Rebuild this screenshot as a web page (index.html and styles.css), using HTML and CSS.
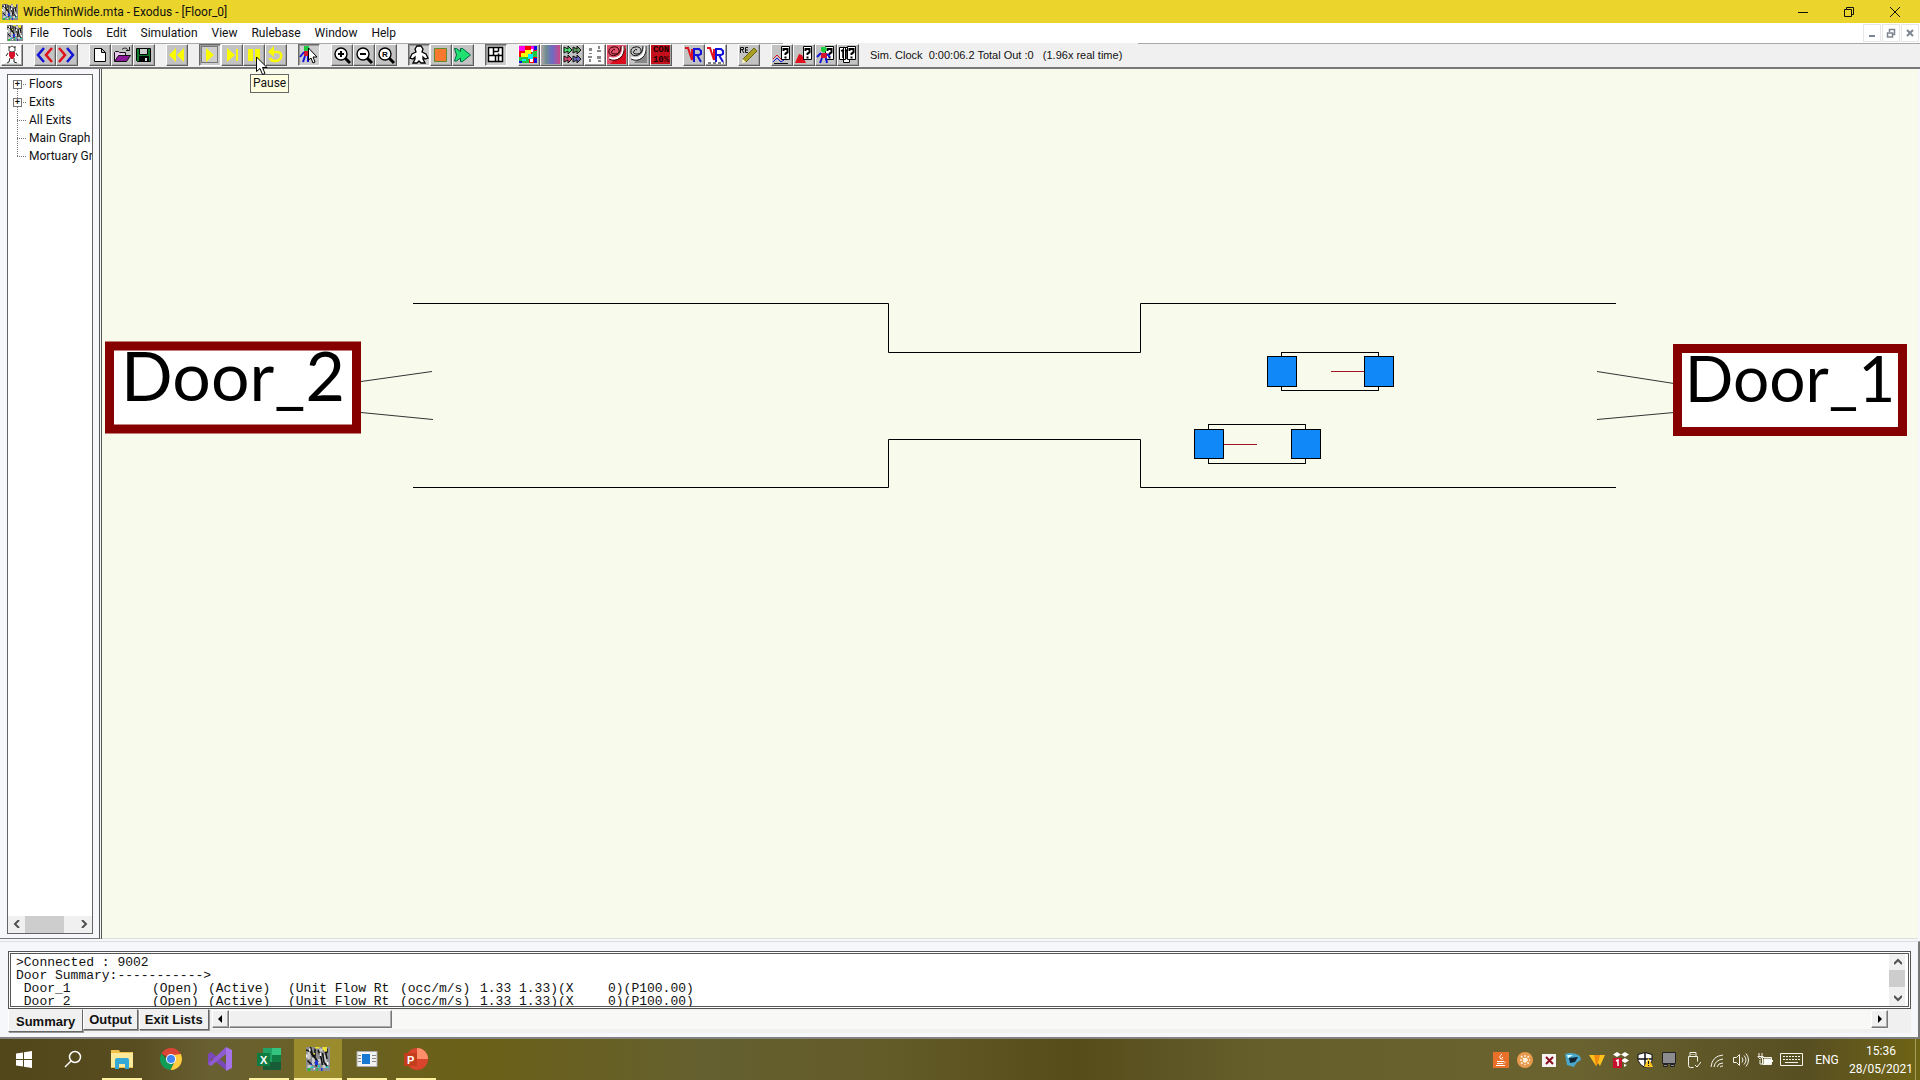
FILE: index.html
```html
<!DOCTYPE html>
<html lang="en">
<head>
<meta charset="utf-8">
<title>WideThinWide.mta - Exodus - [Floor_0]</title>
<link rel="stylesheet" href="styles.css">
</head>
<body>
<svg class="defs" aria-hidden="true">
  <symbol id="exodus" viewBox="0 0 16 16">
    <path fill="#8c8c90" d="M0 0h16v16H0z"/>
    <path fill="#c9c9cc" d="M1 3h2v5H1zM4 6h2v6H4zM7 8h3v3H7zM12 5h2v6h-2zM9 1h2v2H9zM1 12h3v2H1zM11 12h3v2h-3z"/>
    <path stroke="#111" fill="none" d="M0 2l3 1 2 4M3 0l1 4 3 5M6 1v6l2 3M8 2l2 5 1 5M11 4l1 6 2 3M13 3l1 5M1 9l3 3M14 1v3M6 10l1 3"/>
    <path fill="#ece23a" d="M6 0h3v1H6zM11 0h3v3h-2V2h-1zM5 4h1v1H5z"/>
    <path fill="#f5f5f5" d="M2 1h1v2H2zM9 4h1v2H9zM14 10h1v2h-1zM5 14h1v1H5zM0 5h1v2H0z"/>
    <path fill="#2037d8" d="M6 9h2v3H6zM10 14h1v2h-1zM3 11h1v1H3z"/>
    <path fill="#1fd0c8" d="M3 13h2v1H3zM8 12h1v2H8zM13 13h2v1h-2z"/>
    <path fill="#29b83c" d="M1 14h2v2H1zM7 14h1v2H7z"/>
  </symbol>
  <symbol id="lens" viewBox="0 0 20 20">
    <path d="M13 13l5 5" stroke="#000" stroke-width="3"/>
    <circle cx="9" cy="9" r="6" fill="#fff" stroke="#000" stroke-width="1.4"/>
  </symbol>
  <symbol id="query" viewBox="0 0 20 20">
    <path fill="#fff" stroke="#000" d="M9.500 1.500h8v13h-8z"/>
    <path fill="none" stroke="#000" stroke-width="2" d="M11.500 6V4h4v3.500l-2 1V10M13.500 11.500v2"/>
  </symbol>
</svg>

<header class="titlebar">
  <svg class="logo"><use href="#exodus"/></svg>
  <h1 class="title">WideThinWide.mta - Exodus - [Floor_0]</h1>
  <div class="window-buttons">
    <button class="win-btn" aria-label="Minimize"><svg viewBox="0 0 12 12"><path d="M1 6.500h10"/></svg></button>
    <button class="win-btn" aria-label="Restore"><svg viewBox="0 0 12 12"><path d="M1.500 3.500h7v7h-7zM3.500 3.500v-2h7v7h-2"/></svg></button>
    <button class="win-btn" aria-label="Close"><svg viewBox="0 0 12 12"><path d="M1 1l10 10M11 1L1 11"/></svg></button>
  </div>
</header>

<nav class="menubar" aria-label="Main menu">
  <svg class="logo"><use href="#exodus"/></svg>
  <button class="menu">File</button>
  <button class="menu">Tools</button>
  <button class="menu">Edit</button>
  <button class="menu">Simulation</button>
  <button class="menu">View</button>
  <button class="menu">Rulebase</button>
  <button class="menu">Window</button>
  <button class="menu">Help</button>
  <div class="mdi-buttons">
    <button class="mdi-btn" aria-label="Minimize floor"><svg viewBox="0 0 10 10"><path d="M2 8h6"/></svg></button>
    <button class="mdi-btn" aria-label="Restore floor"><svg viewBox="0 0 10 10"><path stroke-width="1.500" d="M1.500 5h5v4h-5zM3.500 4V1.500h5v5H7"/></svg></button>
    <button class="mdi-btn" aria-label="Close floor"><svg viewBox="0 0 10 10"><path d="M2 2l6 6M8 2L2 8"/></svg></button>
  </div>
</nav>

<div class="toolbar">
  <div class="group">
    <button class="tool light" aria-label="Person"><svg viewBox="0 0 20 20"><path fill="#fff" stroke="#444" d="M7 3l3-2 3 2v3l-3 1-3-1z"/><path stroke="#222" fill="none" d="M7 1v2M13 1v2M6 8L4 11M14 8l2 3M8 13l-1 4-2 1M12 13v4l3 1"/><path fill="#d8122a" d="M7 7h6v4l-2 3H9l-2-3z"/><path stroke="#bbb" d="M3 19h14"/></svg></button>
  </div>
  <div class="group">
    <button class="tool" aria-label="Previous"><svg viewBox="0 0 20 20"><g fill="none" stroke-width="2.500"><path stroke="#1414d8" d="M9 3l-6 7 6 7"/><path stroke="#e0101c" d="M17 3l-6 7 6 7"/></g></svg></button>
    <button class="tool" aria-label="Next"><svg viewBox="0 0 20 20"><g fill="none" stroke-width="2.500"><path stroke="#e0101c" d="M2 3l6 7-6 7"/><path stroke="#1414d8" d="M10 3l6 7-6 7"/></g></svg></button>
  </div>
  <div class="group">
    <button class="tool" aria-label="New"><svg viewBox="0 0 20 20"><path fill="#fff" stroke="#000" d="M4.500 3.500h7l4 4v9h-11zM11.500 3.500v4h4"/></svg></button>
    <button class="tool" aria-label="Open"><svg viewBox="0 0 20 20"><path fill="#e8c8ec" stroke="#111" d="M2.500 16V7.500l1-1h3l1 1h6V10"/><path fill="#8a1898" stroke="#111" d="M2.500 16.500l4-6h12l-4 6z"/><path fill="none" stroke="#111" d="M10 4.500c2-2 5-2 6 1M14 5.500h3.500V2"/></svg></button>
    <button class="tool" aria-label="Save"><svg viewBox="0 0 20 20"><path fill="#0c7a28" stroke="#000" d="M2.500 3.500h14v13h-13l-1-1z"/><path fill="#ccc" stroke="#000" d="M5.500 3.500h8v6h-8z"/><path fill="#000" d="M5 11h10v6H5z"/><path fill="#ddd" d="M11 13h2v3h-2z"/></svg></button>
  </div>
  <div class="group">
    <button class="tool" aria-label="Rewind"><svg viewBox="0 0 20 20"><path fill="#fafa00" d="M9 3v14l-7-7zM17 3v14l-7-7z"/></svg></button>
  </div>
  <div class="group">
    <button class="tool pressed" aria-label="Play"><svg viewBox="0 0 20 20"><path fill="none" stroke="#222" stroke-dasharray="1 1" d="M1.500 1.500h16v16h-16z"/><path fill="#fafa00" d="M6 3l8 7-8 7z"/></svg></button>
    <button class="tool" aria-label="Step"><svg viewBox="0 0 20 20"><path fill="#fafa00" d="M5 3l8 7-8 7zM14 4h2v12h-2z"/></svg></button>
    <button class="tool" aria-label="Pause" aria-describedby="pause-tip"><svg viewBox="0 0 20 20"><path fill="#fafa00" d="M4 4h5v12H4zM11 4h5v12h-5z"/></svg></button>
    <button class="tool" aria-label="Reset"><svg viewBox="0 0 20 20"><path fill="none" stroke="#fafa00" stroke-width="2.500" d="M5 7h7q4 1 3 5-1 4-6 4-4 0-5-3"/><path fill="#fafa00" d="M8 1v11L2 7z"/></svg></button>
    <div class="tooltip" id="pause-tip" role="tooltip">Pause</div>
    <svg class="pointer" viewBox="0 0 13 20"><path fill="#fff" stroke="#000" d="M1.500 1v14.500l3.500-3 2.500 6 2.500-1-2.500-6H12z"/></svg>
  </div>
  <div class="group">
    <button class="tool pressed" aria-label="Select person"><svg viewBox="0 0 20 20"><path fill="#1ec840" d="M5 1h5v5H5z"/><path fill="#d8122a" d="M5 6h6v5H5z"/><path stroke="#1414d8" stroke-width="2" fill="none" d="M5 7l-4 5M6 11l-2 6M9 11v6"/><path fill="#fff" stroke="#000" d="M9.500 3v12l2.500-2 2 5 2-1-2-5h4z"/></svg></button>
  </div>
  <div class="group">
    <button class="tool" aria-label="Zoom in"><svg viewBox="0 0 20 20"><use href="#lens"/><path stroke="#000" stroke-width="2" d="M6 9h6M9 6v6"/></svg></button>
    <button class="tool" aria-label="Zoom out"><svg viewBox="0 0 20 20"><use href="#lens"/><path stroke="#000" stroke-width="2" d="M6 9h6"/></svg></button>
    <button class="tool" aria-label="Reset zoom"><svg viewBox="0 0 20 20"><use href="#lens"/><text class="glyph" x="6" y="12">R</text></svg></button>
  </div>
  <div class="group">
    <button class="tool pressed" aria-label="Occupants"><svg viewBox="0 0 20 20"><path fill="#fff" stroke="#000" stroke-width="1.300" d="M6 4l2-3h4l2 3-1 3 4 2 2 4-3 1-2-2v2l2 4h-4l-2-2-2 2H4l2-4v-2l-2 2-3-1 2-4 4-2z"/></svg></button>
    <button class="tool" aria-label="Stop"><svg viewBox="0 0 20 20"><path fill="#f87830" stroke="#5f8c30" d="M3.500 3.500h12v13h-12z"/></svg></button>
    <button class="tool" aria-label="Go"><svg viewBox="0 0 20 20"><path fill="#20e070" stroke="#064" d="M1.500 3.500h2l4 3V3.500h2l8 6.500-8 6.500h-2V13l-4 3h-2l2-6z"/></svg></button>
  </div>
  <div class="group">
    <button class="tool pressed" aria-label="Floor grid"><svg viewBox="0 0 20 20"><path fill="#fff" stroke="#000" stroke-width="1.500" d="M2.500 2.500h14v14h-14zM7.500 2.500v8M12.500 2.500v4M9.500 10.500v6M12.500 8.500v8M2.500 10.500h14M7.500 6.500h5"/></svg></button>
  </div>
  <div class="group">
    <button class="tool" aria-label="Colours"><svg viewBox="0 0 20 20"><path fill="#f00" d="M0 1h18v17H0z"/><path fill="#f0e" d="M0 1h6v5H0zM12 1h3v5h-3z"/><path fill="#ff0" d="M6 5h6v4H9v3H2V8h4z"/><path fill="#1ec840" d="M0 12h10v6H0zM13 6h5v6h-5z"/><path fill="#0ef" d="M9 9h5v5H9zM3 14h4v2H3z"/><path fill="#11d" d="M15 1h3v4h-3zM15 13h3v5h-3zM0 16h3v2H0z"/><path fill="#fff" d="M12 4h2v3h-2zM11 14h3v3h-3z"/></svg></button>
    <button class="tool spectrum" aria-label="Contour colours"></button>
    <button class="tool" aria-label="Flow arrows"><svg viewBox="0 0 20 20"><g stroke="#111"><path fill="#4be070" d="M1 2l4 2V1l4 4-4 4V6L1 8z"/><path fill="#5c9c5c" d="M10 2l4 2V1l4 4-4 4V6l-4 2z"/><path fill="#d84870" d="M1 11l4 2v-3l4 4-4 4v-3l-4 2z"/><path fill="#6464b8" d="M10 11l4 2v-3l4 4-4 4v-3l-4 2z"/></g></svg></button>
    <button class="tool light" aria-label="Footsteps"><svg viewBox="0 0 20 20"><path fill="#888" d="M4 3h3v3H4zM4 8h3v1H4zM13 1h2v3h-2zM12 5h4v2h-4zM3 11h4v2H3zM4 14h2v3H4zM12 11h4v3h-4zM13 15h3v2h-3z"/></svg></button>
    <button class="tool" aria-label="Red contours"><svg viewBox="0 0 20 20"><path fill="#e0506a" d="M0 0h19v19H0z"/><path fill="#d80c1c" d="M3 19L19 3v16z"/><path fill="none" stroke="#fff" stroke-width="2.500" d="M16 1q1 8-4 11T2 13"/><path fill="none" stroke="#300" d="M17 1q1 8-4 12T2 14M14 1q0 7-5 9T2 8q-1-5 4-6t6 3-4 4-3-3 3-1"/></svg></button>
    <button class="tool" aria-label="Grey contours"><svg viewBox="0 0 20 20"><path fill="#888" d="M5 18L18 4v14z"/><path fill="none" stroke="#fff" stroke-width="3" d="M16 1q1 8-4 11T2 13"/><path fill="none" stroke="#111" d="M17 1q1 8-4 12T2 14M14 1q0 7-5 9T2 8q-1-5 4-6t6 3-4 4-3-3 3-1"/></svg></button>
    <button class="tool contour" aria-label="Contour 10%"><span>CON</span><span>10%</span></button>
  </div>
  <div class="group">
    <button class="tool" aria-label="VR"><svg viewBox="0 0 20 20"><path fill="none" stroke="#e0101c" stroke-width="2" d="M1 3h3l4 12V4"/><path fill="none" stroke="#1414d8" stroke-width="2" d="M10 17V4h5l2 2v3l-2 1h-5M13 10l4 7"/></svg></button>
    <button class="tool light" aria-label="VR options"><svg viewBox="0 0 20 20"><path fill="none" stroke="#e0101c" stroke-width="2" d="M1 3h3l4 12V4"/><path fill="none" stroke="#1414d8" stroke-width="2" d="M10 17V4h5l2 2v3l-2 1h-5M13 10l4 7"/><path stroke="#000" stroke-dasharray="3 2" d="M2 18h16"/></svg></button>
  </div>
  <div class="group">
    <button class="tool" aria-label="Edit rules"><svg viewBox="0 0 20 20"><path fill="none" stroke="#111" d="M1.500 8V2.500h3v2h-3M3 5l2 3M9 2.500H6.500v5H9M6.500 5H9"/><path fill="#a8a020" stroke="#6a6410" d="M4 14L15 3l3 3L7 17z"/><path fill="#fff8b0" d="M4 14l3 3-4 1z"/></svg></button>
  </div>
  <div class="group">
    <button class="tool" aria-label="Graph query"><svg viewBox="0 0 20 20"><path fill="none" stroke="#d8122a" d="M1 14l4-4 5 5"/><path fill="none" stroke="#1414d8" d="M1 17l4-4 4 4 3-2"/><path stroke="#111" d="M2 18.500h14"/><use href="#query"/></svg></button>
    <button class="tool" aria-label="Hazard query"><svg viewBox="0 0 20 20"><path fill="#e0101c" d="M1 18l4-9 3 1 4 8z"/><use href="#query"/></svg></button>
    <button class="tool" aria-label="Person query"><svg viewBox="0 0 20 20"><use href="#query"/><path fill="#1ed040" d="M5 2h5l1 3-3 3-3-2z"/><path fill="#d8122a" d="M5 8h6v5H5z"/><path stroke="#1414d8" stroke-width="2" fill="none" d="M5 8l-4 4M11 9l3 3M6 13l-2 5M10 13l1 5"/></svg></button>
    <button class="tool" aria-label="Group query"><svg viewBox="0 0 20 20"><path fill="#fff" stroke="#000" d="M1.500 2.500h6v12h-6zM5.500 2.500h6v15h-6z"/><path stroke="#000" fill="none" stroke-width="1.500" d="M3 6l2-1v8M7 6l2-1v9"/><use href="#query"/></svg></button>
  </div>
  <div class="clock">Sim. Clock&nbsp; 0:00:06.2 Total Out :0&nbsp;&nbsp; (1.96x real time)</div>
</div>

<main class="workspace">
  <aside class="sidebar">
    <div class="tree-box">
      <ul class="tree">
        <li class="node"><button class="expander" aria-label="Expand Floors">+</button>Floors</li>
        <li class="node"><button class="expander" aria-label="Expand Exits">+</button>Exits</li>
        <li class="node">All Exits</li>
        <li class="node">Main Graph</li>
        <li class="node">Mortuary Gr</li>
      </ul>
      <div class="tree-scroll">
        <button class="chevron" aria-label="Scroll left"><svg viewBox="0 0 8 8"><path d="M6 0L2 4l4 4"/></svg></button>
        <div class="tree-thumb"></div>
        <button class="chevron" aria-label="Scroll right"><svg viewBox="0 0 8 8"><path d="M2 0l4 4-4 4"/></svg></button>
      </div>
    </div>
  </aside>
  <section class="floor" aria-label="Floor_0">
    <svg class="plan" viewBox="102 69 1816 869">
      <path class="wall" d="M413 303.500h475.500v49h252v-49H1616M413 487.500h475.500v-48h252v48H1616"/>
      <path class="link" d="M361 381.500L432 371.500M361 412.500L433 419.500M1597 371.500L1674 383.500M1597 419.500L1674 412.500"/>
      <g class="door large"><rect x="109.500" y="346" width="247" height="83"/><text x="233" y="401">Door_2</text></g>
      <g class="door"><rect x="1677.500" y="348.500" width="225" height="83"/><text x="1790" y="402">Door_1</text></g>
      <g class="agent">
        <rect class="frame" x="1281.500" y="352.500" width="97" height="38"/>
        <path d="M1331 371.500h34"/>
        <rect x="1267.500" y="356.500" width="29" height="30"/><rect x="1364.500" y="356.500" width="29" height="30"/>
      </g>
      <g class="agent">
        <rect class="frame" x="1208.500" y="424.500" width="97" height="39"/>
        <path d="M1223 444.500h34"/>
        <rect x="1194.500" y="429.500" width="29" height="29"/><rect x="1291.500" y="429.500" width="29" height="29"/>
      </g>
    </svg>
  </section>
</main>

<section class="output">
  <div class="console">
    <div class="log">
      <div>&gt;Connected : 9002</div>
      <div>Door Summary:-----------&gt;</div>
      <div class="door-row"><span>&nbsp;Door_1</span><span>(Open)</span><span>(Active)</span><span>(Unit Flow Rt</span><span>(occ/m/s)</span><span>1.33 1.33)(X</span><span>0)(P100.00)</span></div>
      <div class="door-row"><span>&nbsp;Door_2</span><span>(Open)</span><span>(Active)</span><span>(Unit Flow Rt</span><span>(occ/m/s)</span><span>1.33 1.33)(X</span><span>0)(P100.00)</span></div>
    </div>
    <div class="log-scroll">
      <button class="chevron" aria-label="Scroll up"><svg viewBox="0 0 8 8"><path d="M0 6l4-4 4 4"/></svg></button>
      <div class="log-thumb"></div>
      <button class="chevron" aria-label="Scroll down"><svg viewBox="0 0 8 8"><path d="M0 2l4 4 4-4"/></svg></button>
    </div>
  </div>
  <div class="tabs">
    <button class="tab active">Summary</button>
    <button class="tab">Output</button>
    <button class="tab">Exit Lists</button>
    <div class="track">
      <button class="arrow" aria-label="Scroll log left"><svg viewBox="0 0 8 8"><path d="M6 0v8L2 4z"/></svg></button>
      <div class="track-thumb"></div>
      <button class="arrow end" aria-label="Scroll log right"><svg viewBox="0 0 8 8"><path d="M2 0v8l4-4z"/></svg></button>
    </div>
  </div>
</section>

<footer class="taskbar">
  <div class="apps">
    <button class="app" aria-label="Start"><svg viewBox="0 0 24 24"><path fill="#fff" d="M4 6.500l7-1V12H4zM12 5.300l8-1.300v8h-8zM4 13h7v6.500l-7-1zM12 13h8v8l-8-1.300z"/></svg></button>
    <button class="app" aria-label="Search"><svg viewBox="0 0 24 24"><circle cx="14" cy="10" r="5.500" fill="none" stroke="#fff" stroke-width="1.500"/><path stroke="#fff" stroke-width="1.500" d="M10 14l-6 6"/></svg></button>
    <button class="app open" aria-label="File Explorer"><svg viewBox="0 0 24 24"><path fill="#f0c04a" d="M1 3h8l1 2h13v16H1z"/><path fill="#fde99a" d="M1 6h22v14H1z"/><path fill="#36a8d8" d="M5 13q0-2 2-2h10q2 0 2 2v9h-4v-5H9v5H5z"/></svg></button>
    <button class="app" aria-label="Chrome"><svg viewBox="0 0 24 24"><path fill="#db4437" d="M12 12L2.500 6.500A11 11 0 0 1 21.500 6.500L22 8H12z"/><path fill="#0f9d58" d="M2.500 6.500A11 11 0 0 0 11.500 23l4-9-7 0z"/><path fill="#ffcd40" d="M21.800 7A11 11 0 0 1 11.500 23l4.500-9-1-6z"/><circle cx="12" cy="12" r="5" fill="#fff"/><circle cx="12" cy="12" r="4" fill="#4285f4"/></svg></button>
    <button class="app" aria-label="Visual Studio"><svg viewBox="0 0 24 24"><path fill="#7a48b8" d="M0 7l3-2 15 12v6L3 11v8l-3-2z"/><path fill="#8f5cd0" d="M0 17L18 0v7L3 19z"/><path fill="#a572e8" d="M18 0l6 3v18l-6 3z"/></svg></button>
    <button class="app open" aria-label="Excel"><svg viewBox="0 0 24 24"><path fill="#21a366" d="M6 1h18v22H6z"/><path fill="#33c481" d="M15 1h9v7h-9z"/><path fill="#107c41" d="M15 8h9v7h-9z"/><path fill="#185c37" d="M6 15h18v8H6z"/><path fill="#107c41" d="M0 6h13v13H0z"/><text class="badge-text" x="3" y="17">X</text></svg></button>
    <button class="app open current" aria-label="Exodus"><svg viewBox="0 0 16 16"><use href="#exodus"/></svg></button>
    <button class="app open" aria-label="Viewer"><svg viewBox="0 0 24 24"><path fill="#f2f2f2" stroke="#aaa" d="M2 4.500h20v15H2z"/><path fill="#1678d0" d="M7 7h8v10H7z"/><path stroke="#888" d="M3 8.500h3M3 11.500h3M3 14.500h3M17 8.500h4M17 11.500h4M17 14.500h4"/></svg></button>
    <button class="app open" aria-label="PowerPoint"><svg viewBox="0 0 24 24"><circle cx="13" cy="12" r="11" fill="#d8452c"/><path fill="#ff8f6b" d="M13 1a11 11 0 0 1 11 11H13z"/><path fill="#c43e1c" d="M0 6h13v13H0z"/><text class="badge-text" x="3" y="17">P</text></svg></button>
  </div>
  <div class="tray">
    <button class="tray-icon" aria-label="Java"><svg viewBox="0 0 16 16"><path fill="#e8702a" d="M0 0h16v16H0z"/><path fill="none" stroke="#fff" d="M9 2q-4 3-1 5M10 5q-2 1-1 3M4 9.500h7q2 1 0 2M4 11.500h6M3 13.500h9"/></svg></button>
    <button class="tray-icon" aria-label="Updater"><svg viewBox="0 0 16 16"><circle cx="8" cy="8" r="8" fill="#e89a4c"/><path stroke="#fff0dc" stroke-width="1.500" stroke-dasharray="2 1" d="M8 3v10M3 8h10M4 4l8 8M12 4l-8 8"/></svg></button>
    <button class="tray-icon" aria-label="Error"><svg viewBox="0 0 16 16"><path fill="#f4f4f4" d="M1 2h14v13H1z"/><path stroke="#8c1020" stroke-width="2" d="M5 5l7 7M12 5l-7 7"/></svg></button>
    <button class="tray-icon" aria-label="Helmet"><svg viewBox="0 0 16 16"><path fill="#4aa8cc" d="M0 2q8-3 15 2l1 4q-5 2-7 7L2 13z"/><path fill="#123" d="M4 6l9-1-3 5-5 1z"/><path fill="#dff" d="M2 3l6 0-5 3z"/></svg></button>
    <button class="tray-icon" aria-label="W"><svg viewBox="0 0 16 16"><path fill="#ffc21a" d="M0 3h16l-5 11-2-3-2 3z"/><path fill="#f08a10" d="M5 3h6l-2 8-2 3z"/></svg></button>
    <button class="tray-icon" aria-label="Dropbox"><svg viewBox="0 0 16 16"><path fill="#fff" d="M4 0l4 2.500L4 5 0 2.500zM12 0l4 2.500L12 5 8 2.500zM12 6l4 2.500-4 2.500-4-2.500zM11 12l3 1-3 2z"/><path fill="#c8102e" d="M0 6h9v10H0z"/><path fill="none" stroke="#fff" stroke-width="1.500" d="M3 9l2-1v6"/></svg></button>
    <button class="tray-icon" aria-label="Security"><svg viewBox="0 0 16 16"><path fill="#fff" stroke="#111" d="M8 .5l7 2v6q-2 5-7 7-5-2-7-7v-6z"/><path stroke="#111" stroke-width="1.500" d="M8 1v14M1 7h14"/><path fill="#ffc820" d="M11.500 6L16 15H7z"/><path stroke="#111" d="M11.500 9v3M11.500 13v1"/></svg></button>
    <button class="tray-icon" aria-label="Display"><svg viewBox="0 0 16 16"><path fill="#8c8c90" stroke="#222" d="M1.500.5h13v11h-13zM2.500 12.500h4v2h-4zM9.500 12.500h4v2h-4z"/></svg></button>
    <button class="tray-icon line" aria-label="USB"><svg viewBox="0 0 16 16"><path d="M5 4V.5h6V4M3.500 4.500h9v5M3.500 4.500v9q0 2 2 2h3M10 13l2 2 4-5M7 2v1M9 2v1"/></svg></button>
    <button class="tray-icon line" aria-label="Wi-Fi"><svg viewBox="0 0 16 16"><path d="M2 15Q3 4 14 3M5 15q1-7 9-8M8 15q1-4 6-4M11 15q1-1 3-1"/></svg></button>
    <button class="tray-icon line" aria-label="Volume"><svg viewBox="0 0 16 16"><path d="M.5 5.500h3l3-3v11l-3-3h-3zM9 5.500q2 2.500 0 5M11 3.500q4 4.500 0 9M13 1.500q5 6.500 0 13"/></svg></button>
    <button class="tray-icon line" aria-label="Battery"><svg viewBox="0 0 16 16"><path d="M5.500 5.500h9v7h-9zM15.500 8v2M2 1v3M5 1v3M.5 4.500h6M1.500 5q2 4 3 0M3 8v4h2"/><path fill="#fff" d="M7 7h7v5H7z"/></svg></button>
    <button class="tray-icon line keyboard" aria-label="Keyboard"><svg viewBox="0 0 24 16"><path d="M.5 1.500h22v12H.5z"/><path stroke-dasharray="2 1" d="M3 4.500h18M3 7.500h18"/><path d="M5 10.500h13"/></svg></button>
    <button class="lang">ENG</button>
    <button class="time"><span>15:36</span><span>28/05/2021</span></button>
  </div>
</footer>
</body>
</html>
```

FILE: styles.css
```css
* { box-sizing: border-box; }

html, body { height: 100%; }

body {
  margin: 0;
  display: flex;
  flex-direction: column;
  overflow: hidden;
  background: #f5f7fb;
  color: #111;
  font: 12px/18px Roboto, "Open Sans", sans-serif;
}

button {
  margin: 0;
  padding: 0;
  border: 0;
  background: none;
  color: inherit;
  font: inherit;
}

button svg { display: block; }

.defs { position: absolute; width: 0; height: 0; }

.logo { width: 16px; height: 16px; flex: none; }

/* Title bar */
.titlebar {
  display: flex;
  align-items: center;
  height: 23px;
  flex: none;
  padding-left: 2px;
  gap: 5px;
  background: #ebd42c;
}

.title { margin: 0; font-size: 12px; font-weight: 400; }

.window-buttons { display: flex; margin-left: auto; padding-right: 2px; }

.win-btn { display: grid; place-items: center; width: 46px; height: 20px; }

.win-btn svg { width: 12px; height: 12px; fill: none; stroke: #111; }

/* Menu bar */
.menubar {
  display: flex;
  align-items: center;
  height: 20px;
  flex: none;
  padding-left: 7px;
  background: #fff;
}

.menu { padding: 0 7px; }

.mdi-buttons { display: flex; gap: 1px; margin-left: auto; padding-right: 1px; }

.mdi-btn {
  display: grid;
  place-items: center;
  width: 18px;
  height: 18px;
  border: 1px solid #e6e6e6;
}

.mdi-btn svg { width: 10px; height: 10px; fill: none; stroke: #7c8590; stroke-width: 2; }

/* Toolbar */
.toolbar {
  display: flex;
  align-items: flex-start;
  gap: 11px;
  height: 26px;
  flex: none;
  padding-left: 1px;
  border-top: 1px solid #a8a8a8;
  border-bottom: 2px solid #777;
  background: #f0f0f0;
}

.group { display: flex; position: relative; }

.tool {
  width: 22px;
  height: 22px;
  border: 1px solid;
  border-color: #fff #5c5c5c #5c5c5c #fff;
  box-shadow: inset -1px -1px #a4a4a4;
  background: #c3c3c3;
}

.tool svg { width: 20px; height: 20px; }

.tool.light { background: #fdfdfd; }

.tool.pressed {
  border-color: #6a6a6a #fff #fff #6a6a6a;
  box-shadow: inset 1px 1px #999;
  background: #cdcdcd;
}

.tool.spectrum {
  background: linear-gradient(90deg, #b8a8a8, #6e8e90 25%, #6c6cc4 55%, #9c5ca8 75%, #d8407c);
}

.tool.contour {
  display: flex;
  flex-direction: column;
  align-items: center;
  background: #c4101c;
  color: #180000;
  font: bold 9px/10px "Liberation Mono", monospace;
}

.glyph { font: bold 8px "Liberation Sans", sans-serif; }

.clock {
  align-self: stretch;
  display: flex;
  align-items: center;
  width: 355px;
  margin: -1px 0 0 -87px;
  padding-left: 87px;
  font: 11px/16px "Liberation Sans", Arial, sans-serif;
  white-space: nowrap;
  background: linear-gradient(#f0f0f0, #f0f0f0) 0 0 / 100% 1px no-repeat;
  pointer-events: none;
}

.tooltip {
  position: absolute;
  z-index: 2;
  left: 51px;
  top: 30px;
  padding: 0 2px;
  border: 1px solid #666;
  background: #ffffe1;
  font-size: 12px;
  line-height: 17px;
}

.pointer { position: absolute; z-index: 3; left: 56px; top: 12px; width: 13px; height: 20px; }

/* Floor tree and plan */
.workspace { display: flex; flex: 1; min-height: 0; padding-right: 2px; }

.sidebar {
  display: flex;
  flex: none;
  width: 102px;
  padding: 5px 5px 4px 7px;
  border-right: 3px double #555;
  border-bottom: 1px solid #777;
}

.tree-box {
  display: flex;
  flex-direction: column;
  width: 86px;
  border: 1px solid #646464;
  background: #fff;
  overflow: hidden;
}

.tree { flex: 1; margin: 0; padding: 0 0 0 9px; list-style: none; }

.node {
  position: relative;
  height: 18px;
  padding-left: 12px;
  white-space: nowrap;
}

.node::before {
  content: "";
  position: absolute;
  left: 0;
  top: 9px;
  width: 9px;
  border-top: 1px dotted #777;
}

.node:not(:last-child)::after {
  content: "";
  position: absolute;
  left: 0;
  top: 9px;
  height: 18px;
  border-left: 1px dotted #777;
}

.expander {
  position: absolute;
  z-index: 1;
  left: -4px;
  top: 5px;
  width: 9px;
  height: 9px;
  border: 1px solid #777;
  background: #fff;
  font: bold 9px/7px "Liberation Sans", sans-serif;
}

.tree-scroll { display: flex; height: 17px; background: #f0f0f0; }

.chevron { display: grid; place-items: center; width: 17px; height: 16px; }

.chevron svg { width: 8px; height: 8px; fill: none; stroke: #505050; stroke-width: 2; }

.tree-thumb { width: 39px; margin-right: auto; background: #cdcdcd; }

.floor {
  flex: 1;
  min-width: 0;
  background: #f8faec;
  border-bottom: 1px solid #ddd;
}

.plan { display: block; width: 100%; height: 100%; }

.wall, .link { fill: none; stroke: #000; }

.link { stroke: #333; }

.door rect { fill: #fff; stroke: #870000; stroke-width: 9; }

.door text { font: 64px Lato, "Open Sans", sans-serif; text-anchor: middle; }

.door.large text { font-size: 68px; }

.agent rect { fill: #1188f8; stroke: #000; }

.agent .frame { fill: none; }

.agent path { stroke: #a01428; }

/* Output pane */
.output {
  flex: none;
  margin-top: 2px;
  padding: 9px 7px 4px 8px;
  border-top: 1px solid #ddd;
  border-right: 2px solid #777;
  border-bottom: 2px solid #808080;
}

.console {
  display: flex;
  height: 58px;
  padding-right: 3px;
  border: 3px double #555;
  background: #fff;
  overflow: hidden;
}

.log {
  flex: 1;
  padding: 2px 5px 0;
  font: 13px/13px "Liberation Mono", "Courier New", monospace;
  white-space: nowrap;
}

.door-row { display: grid; grid-template-columns: 136px 56px 80px 112px 80px 128px auto; }

.log-scroll { display: flex; flex-direction: column; width: 16px; background: #f0f0f0; }

.log-thumb { height: 17px; margin-bottom: auto; background: #cdcdcd; }

.tabs { display: flex; align-items: flex-start; height: 24px; background: #f0f0f0; }

.tab {
  height: 21px;
  padding: 0 5px;
  margin-right: 1px;
  border: 1px solid;
  border-color: transparent #666 #666 #fff;
  box-shadow: 1px 1px #999;
  font: bold 13px/20px "Liberation Sans", Arial, sans-serif;
}

.tab.active { height: 23px; line-height: 24px; margin-right: 0; padding: 0 7px; }

.track {
  display: flex;
  flex: 1;
  height: 19px;
  margin: 1px 23px 0 2px;
  background: #f8f8f7;
}

.arrow, .track-thumb {
  height: 18px;
  border: 1px solid;
  border-color: #fff #777 #777 #fff;
  box-shadow: inset -1px -1px #aaa;
  background: #f0f0f0;
}

.arrow { display: grid; place-items: center; width: 17px; }

.arrow svg { width: 8px; height: 8px; }

.arrow.end { margin-left: auto; }

.track-thumb { width: 163px; }

/* Taskbar */
.taskbar {
  display: flex;
  height: 41px;
  flex: none;
  color: #fff;
  background: linear-gradient(90deg, #51461a, #584d20 7%, #696032 11%, #6b611c 21%, #6a6018 25%, #656030 37%, #635b28 46%, #554c1a 56%, #665f2c 66%, #6a6330 82%, #574e22 94%, #6f6414);
}

.apps { display: flex; gap: 1px; }

.app { display: grid; place-items: center; width: 48px; border-bottom: 2px solid transparent; }

.app svg { width: 24px; height: 24px; }

.app.open {
  background: linear-gradient(#fdf0a0, #fdf0a0) bottom / 40px 2px no-repeat border-box;
}

.app.open.current { background-color: #9a8c2c; background-size: 48px 2px; }

.badge-text { font: bold 11px "Liberation Sans", sans-serif; fill: #fff; }

.tray { display: flex; align-items: center; margin-left: auto; padding-right: 4px; }

.tray-icon { display: grid; place-items: center; width: 24px; height: 24px; }

.tray-icon svg { width: 16px; height: 16px; }

.line svg { fill: none; stroke: #f4f4ea; }

.tray-icon.keyboard { width: 30px; }

.tray-icon.keyboard svg { width: 24px; }

.lang { width: 40px; text-align: center; }

.time {
  display: flex;
  flex-direction: column;
  align-items: center;
  justify-content: center;
  width: 69px;
  height: 41px;
  border-right: 1px solid #a59d60;
}
```
